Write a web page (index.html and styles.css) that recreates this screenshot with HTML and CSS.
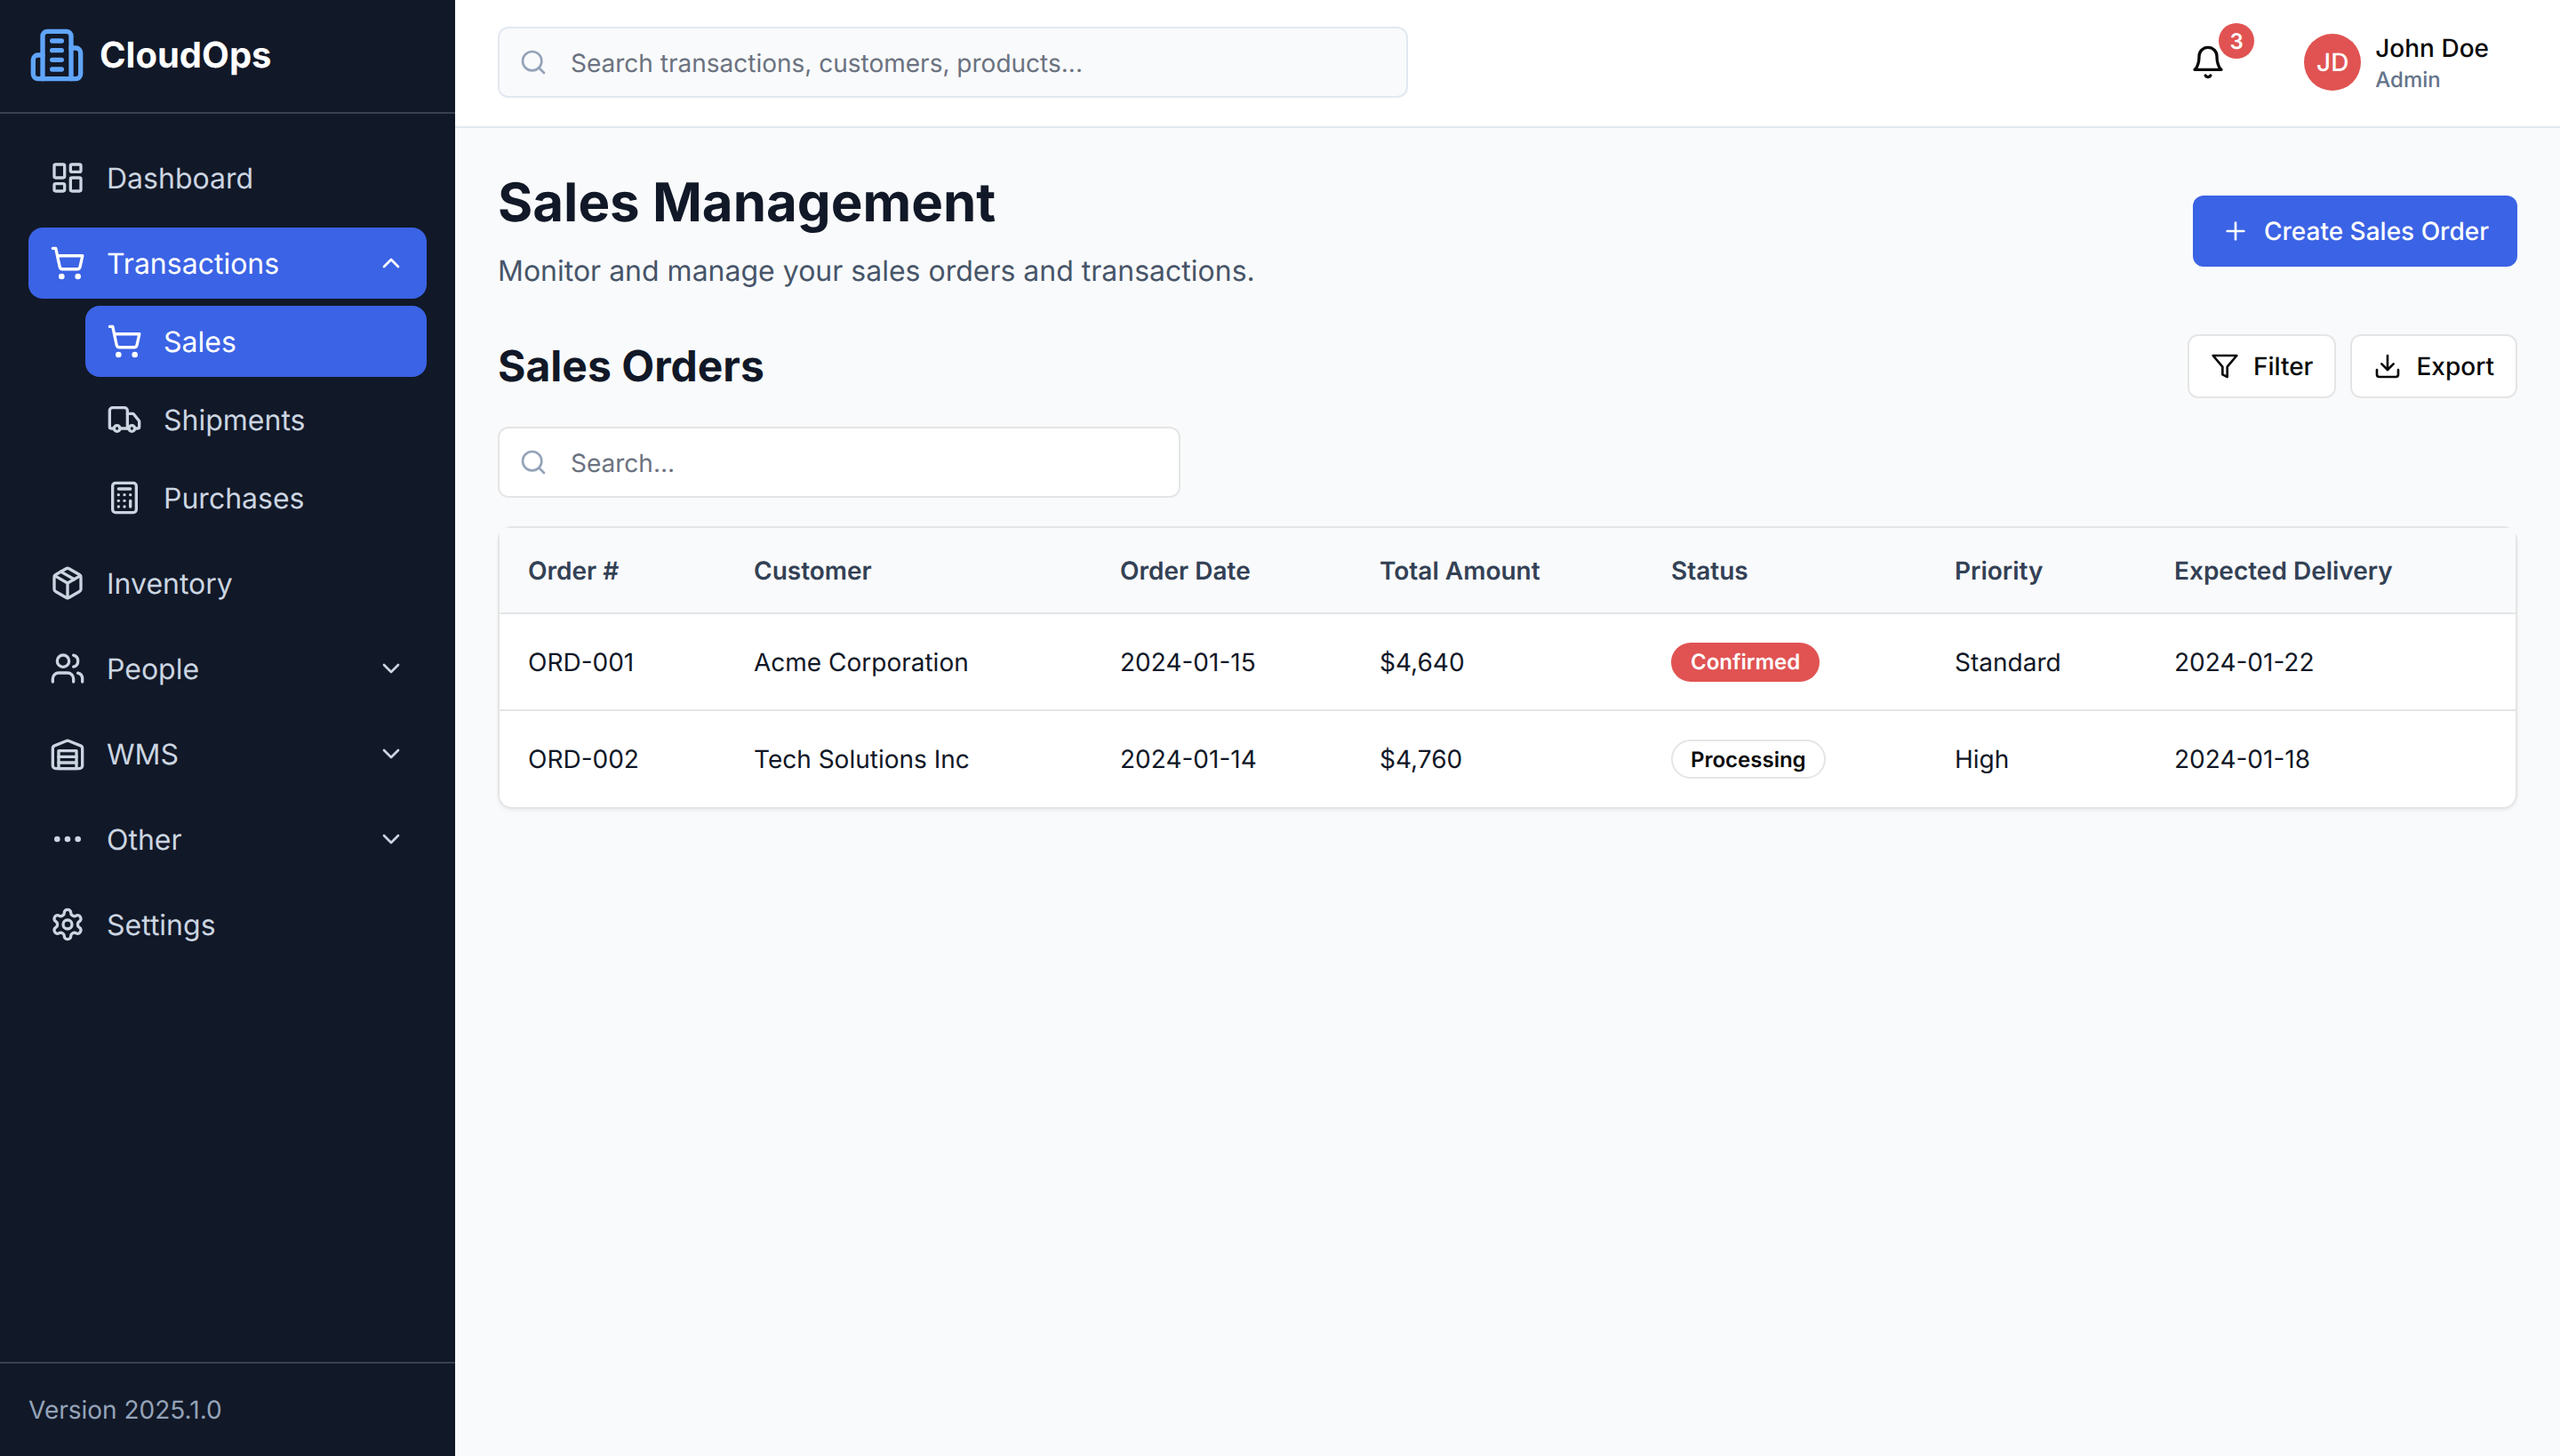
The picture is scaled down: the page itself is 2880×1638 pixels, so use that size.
FILE: index.html
```html
<!DOCTYPE html>
<html lang="en">
<head>
<meta charset="utf-8">
<title>CloudOps - Sales Management</title>
<link rel="stylesheet" href="styles.css">
</head>
<body>
<svg class="sprite" xmlns="http://www.w3.org/2000/svg">
  <symbol id="i-building" viewBox="0 0 24 24"><path d="M6 22V4a2 2 0 0 1 2-2h8a2 2 0 0 1 2 2v18Z"/><path d="M6 12H4a2 2 0 0 0-2 2v6a2 2 0 0 0 2 2h2"/><path d="M18 9h2a2 2 0 0 1 2 2v9a2 2 0 0 1-2 2h-2"/><path d="M10 6h4"/><path d="M10 10h4"/><path d="M10 14h4"/><path d="M10 18h4"/></symbol>
  <symbol id="i-dashboard" viewBox="0 0 24 24"><rect x="3" y="3" width="7" height="9" rx="1"/><rect x="14" y="3" width="7" height="5" rx="1"/><rect x="14" y="12" width="7" height="9" rx="1"/><rect x="3" y="16" width="7" height="5" rx="1"/></symbol>
  <symbol id="i-cart" viewBox="0 0 24 24"><circle cx="8" cy="21" r="1"/><circle cx="19" cy="21" r="1"/><path d="M2.05 2.05h2l2.66 12.42a2 2 0 0 0 2 1.58h9.78a2 2 0 0 0 1.95-1.57l1.65-7.43H5.12"/></symbol>
  <symbol id="i-truck" viewBox="0 0 24 24"><path d="M14 18V6a2 2 0 0 0-2-2H4a2 2 0 0 0-2 2v11a1 1 0 0 0 1 1h2"/><path d="M15 18H9"/><path d="M19 18h2a1 1 0 0 0 1-1v-3.65a1 1 0 0 0-.22-.624l-3.48-4.35A1 1 0 0 0 17.52 8H14"/><circle cx="17" cy="18" r="2"/><circle cx="7" cy="18" r="2"/></symbol>
  <symbol id="i-calculator" viewBox="0 0 24 24"><rect x="4" y="2" width="16" height="20" rx="2"/><path d="M8 6h8"/><path d="M16 14v4"/><path d="M16 10h.01"/><path d="M12 10h.01"/><path d="M8 10h.01"/><path d="M12 14h.01"/><path d="M8 14h.01"/><path d="M12 18h.01"/><path d="M8 18h.01"/></symbol>
  <symbol id="i-package" viewBox="0 0 24 24"><path d="m7.5 4.27 9 5.15"/><path d="M21 8a2 2 0 0 0-1-1.73l-7-4a2 2 0 0 0-2 0l-7 4A2 2 0 0 0 3 8v8a2 2 0 0 0 1 1.73l7 4a2 2 0 0 0 2 0l7-4A2 2 0 0 0 21 16Z"/><path d="m3.3 7 8.7 5 8.7-5"/><path d="M12 22V12"/></symbol>
  <symbol id="i-users" viewBox="0 0 24 24"><path d="M16 21v-2a4 4 0 0 0-4-4H6a4 4 0 0 0-4 4v2"/><circle cx="9" cy="7" r="4"/><path d="M22 21v-2a4 4 0 0 0-3-3.87"/><path d="M16 3.13a4 4 0 0 1 0 7.75"/></symbol>
  <symbol id="i-warehouse" viewBox="0 0 24 24"><path d="M22 8.35V20a2 2 0 0 1-2 2H4a2 2 0 0 1-2-2V8.35A2 2 0 0 1 3.26 6.5l8-3.2a2 2 0 0 1 1.48 0l8 3.2A2 2 0 0 1 22 8.35Z"/><path d="M6 18h12"/><path d="M6 14h12"/><rect x="6" y="10" width="12" height="12"/></symbol>
  <symbol id="i-more" viewBox="0 0 24 24"><circle cx="12" cy="12" r="1"/><circle cx="19" cy="12" r="1"/><circle cx="5" cy="12" r="1"/></symbol>
  <symbol id="i-settings" viewBox="0 0 24 24"><path d="M12.22 2h-.44a2 2 0 0 0-2 2v.18a2 2 0 0 1-1 1.73l-.43.25a2 2 0 0 1-2 0l-.15-.08a2 2 0 0 0-2.73.73l-.22.38a2 2 0 0 0 .73 2.73l.15.1a2 2 0 0 1 1 1.72v.51a2 2 0 0 1-1 1.74l-.15.09a2 2 0 0 0-.73 2.73l.22.38a2 2 0 0 0 2.73.73l.15-.08a2 2 0 0 1 2 0l.43.25a2 2 0 0 1 1 1.73V20a2 2 0 0 0 2 2h.44a2 2 0 0 0 2-2v-.18a2 2 0 0 1 1-1.73l.43-.25a2 2 0 0 1 2 0l.15.08a2 2 0 0 0 2.73-.73l.22-.39a2 2 0 0 0-.73-2.73l-.15-.08a2 2 0 0 1-1-1.74v-.5a2 2 0 0 1 1-1.74l.15-.09a2 2 0 0 0 .73-2.73l-.22-.38a2 2 0 0 0-2.73-.73l-.15.08a2 2 0 0 1-2 0l-.43-.25a2 2 0 0 1-1-1.73V4a2 2 0 0 0-2-2z"/><circle cx="12" cy="12" r="3"/></symbol>
  <symbol id="i-down" viewBox="0 0 24 24"><path d="m6 9 6 6 6-6"/></symbol>
  <symbol id="i-up" viewBox="0 0 24 24"><path d="m18 15-6-6-6 6"/></symbol>
  <symbol id="i-bell" viewBox="0 0 24 24"><path d="M6 8a6 6 0 0 1 12 0c0 7 3 9 3 9H3s3-2 3-9"/><path d="M10.3 21a1.94 1.94 0 0 0 3.4 0"/></symbol>
  <symbol id="i-search" viewBox="0 0 24 24"><circle cx="11" cy="11" r="8"/><path d="m21 21-4.3-4.3"/></symbol>
  <symbol id="i-plus" viewBox="0 0 24 24"><path d="M5 12h14"/><path d="M12 5v14"/></symbol>
  <symbol id="i-filter" viewBox="0 0 24 24"><polygon points="22 3 2 3 10 12.46 10 19 14 21 14 12.46 22 3"/></symbol>
  <symbol id="i-download" viewBox="0 0 24 24"><path d="M21 15v4a2 2 0 0 1-2 2H5a2 2 0 0 1-2-2v-4"/><polyline points="7 10 12 15 17 10"/><line x1="12" y1="15" x2="12" y2="3"/></symbol>
</svg>

<div class="app">
  <aside class="sidebar">
    <div class="brand">
      <svg class="ic ic-logo"><use href="#i-building"/></svg>
      <span class="brand-name">CloudOps</span>
    </div>
    <nav class="nav">
      <a class="item"><svg class="ic"><use href="#i-dashboard"/></svg><span>Dashboard</span></a>
      <div class="group">
        <a class="item active"><svg class="ic"><use href="#i-cart"/></svg><span>Transactions</span><svg class="ic chev"><use href="#i-up"/></svg></a>
        <a class="item sub active"><svg class="ic"><use href="#i-cart"/></svg><span>Sales</span></a>
        <a class="item sub"><svg class="ic"><use href="#i-truck"/></svg><span>Shipments</span></a>
        <a class="item sub"><svg class="ic"><use href="#i-calculator"/></svg><span>Purchases</span></a>
      </div>
      <a class="item"><svg class="ic"><use href="#i-package"/></svg><span>Inventory</span></a>
      <a class="item"><svg class="ic"><use href="#i-users"/></svg><span>People</span><svg class="ic chev"><use href="#i-down"/></svg></a>
      <a class="item"><svg class="ic"><use href="#i-warehouse"/></svg><span>WMS</span><svg class="ic chev"><use href="#i-down"/></svg></a>
      <a class="item"><svg class="ic"><use href="#i-more"/></svg><span>Other</span><svg class="ic chev"><use href="#i-down"/></svg></a>
      <a class="item"><svg class="ic"><use href="#i-settings"/></svg><span>Settings</span></a>
    </nav>
    <div class="version">Version 2025.1.0</div>
  </aside>

  <div class="main">
    <header class="topbar">
      <label class="search search-top">
        <svg class="ic ic-sm"><use href="#i-search"/></svg>
        <input class="search-input" type="text" placeholder="Search transactions, customers, products...">
      </label>
      <div class="topbar-right">
        <div class="bell">
          <svg class="ic"><use href="#i-bell"/></svg>
          <span class="bell-count">3</span>
        </div>
        <div class="user">
          <span class="avatar">JD</span>
          <div class="user-text">
            <span class="user-name">John Doe</span>
            <span class="user-role">Admin</span>
          </div>
        </div>
      </div>
    </header>

    <main class="content">
      <div class="page-head">
        <div>
          <h1 class="page-title">Sales Management</h1>
          <p class="page-sub">Monitor and manage your sales orders and transactions.</p>
        </div>
        <button class="btn btn-primary"><svg class="ic ic-sm"><use href="#i-plus"/></svg><span>Create Sales Order</span></button>
      </div>

      <div class="section-head">
        <h2 class="section-title">Sales Orders</h2>
        <div class="actions">
          <button class="btn btn-outline"><svg class="ic ic-sm"><use href="#i-filter"/></svg><span>Filter</span></button>
          <button class="btn btn-outline"><svg class="ic ic-sm"><use href="#i-download"/></svg><span>Export</span></button>
        </div>
      </div>

      <label class="search search-table">
        <svg class="ic ic-sm"><use href="#i-search"/></svg>
        <input class="search-input" type="text" placeholder="Search...">
      </label>

      <div class="card">
        <table class="table">
          <colgroup>
            <col class="c1"><col class="c2"><col class="c3"><col class="c4"><col class="c5"><col class="c6"><col class="c7">
          </colgroup>
          <thead>
            <tr><th>Order #</th><th>Customer</th><th>Order Date</th><th>Total Amount</th><th>Status</th><th>Priority</th><th>Expected Delivery</th></tr>
          </thead>
          <tbody>
            <tr><td>ORD-001</td><td>Acme Corporation</td><td>2024-01-15</td><td>$4,640</td><td><span class="badge badge-red">Confirmed</span></td><td>Standard</td><td>2024-01-22</td></tr>
            <tr><td>ORD-002</td><td>Tech Solutions Inc</td><td>2024-01-14</td><td>$4,760</td><td><span class="badge badge-outline">Processing</span></td><td>High</td><td>2024-01-18</td></tr>
          </tbody>
        </table>
      </div>
    </main>
  </div>
</div>
</body>
</html>
```
FILE: styles.css
```css
* { box-sizing: border-box; }
html, body { margin: 0; height: 100%; }
body {
  font-family: Inter, "Liberation Sans", sans-serif;
  color: #0a0a0a;
  background: #f9fafb;
  overflow: hidden;
  text-rendering: geometricPrecision;
}
.sprite { display: none; }

.ic {
  width: 40px; height: 40px; flex: none;
  fill: none; stroke: currentColor; stroke-width: 2;
  stroke-linecap: round; stroke-linejoin: round;
}
.ic-sm { width: 32px; height: 32px; }
.ic-logo { width: 64px; height: 64px; color: #60a5fa; }

.app { display: flex; height: 100vh; }

/* Sidebar */
.sidebar {
  width: 512px; flex: none;
  display: flex; flex-direction: column;
  background: #111827; color: #cbd5e1;
}
.brand {
  height: 128px; flex: none;
  display: flex; align-items: center; gap: 16px;
  padding: 0 32px 2px;
  border-bottom: 2px solid #374151;
}
.brand-name { font-size: 40px; font-weight: 700; color: #fff; line-height: 56px; }
.nav { flex: 1; display: flex; flex-direction: column; gap: 16px; padding: 32px; }
.group { display: flex; flex-direction: column; gap: 8px; }
.item {
  height: 80px;
  display: flex; align-items: center; gap: 24px;
  padding: 0 24px;
  border-radius: 16px;
  font-size: 32px; line-height: 48px;
}
.item > span { flex: 1; padding-top: 2px; }
.item.sub { margin-left: 64px; }
.item.active { background: #3b63e5; color: #fff; }
.chev { width: 32px; height: 32px; }
.version {
  flex: none;
  padding: 32px;
  border-top: 2px solid #374151;
  font-size: 28px; line-height: 40px;
  color: #94a3b8;
}

/* Main */
.main { flex: 1; min-width: 0; display: flex; flex-direction: column; }
.topbar {
  height: 144px; flex: none;
  display: flex; align-items: center; justify-content: space-between;
  padding: 0 48px 2px;
  background: #fff;
  border-bottom: 2px solid #e2e8f0;
}
.search {
  height: 80px;
  display: flex; align-items: center; gap: 26px;
  padding: 0 22px;
  border: 2px solid #e5e5e5;
  border-radius: 12px;
  color: #94a3b8;
}
.search-top { width: 1024px; background: #f9fafb; border-color: #e2e8f0; }
.search-table { width: 768px; background: #fff; margin-bottom: 32px; }
.search-input {
  flex: 1; min-width: 0;
  border: 0; outline: 0; padding: 2px 0 0;
  background: transparent;
  font: 400 28px/40px Inter, "Liberation Sans", sans-serif;
  text-rendering: geometricPrecision;
  color: #0a0a0a;
}
.search-input::placeholder { color: #6b7280; opacity: 1; }

.topbar-right { display: flex; align-items: center; gap: 88px; }
.bell { position: relative; width: 40px; height: 40px; color: #0a0a0a; }
.bell-count {
  position: absolute; top: -24px; left: 32px;
  width: 40px; height: 40px; border-radius: 50%;
  display: flex; align-items: center; justify-content: center;
  background: #e05352; color: #fff;
  font-size: 24px; font-weight: 600;
}
.user { display: flex; align-items: center; gap: 16px; padding-right: 32px; }
.avatar {
  width: 64px; height: 64px; border-radius: 50%;
  display: flex; align-items: center; justify-content: center;
  background: #e05352; color: #fff;
  font-size: 28px; font-weight: 500;
}
.user-text { display: flex; flex-direction: column; }
.user-name { font-size: 28px; line-height: 40px; font-weight: 500; }
.user-role { font-size: 24px; line-height: 32px; font-weight: 500; color: #64748b; }

/* Content */
.content { flex: 1; padding: 48px; }
.page-head { display: flex; justify-content: space-between; align-items: flex-start; margin-bottom: 48px; }
.page-title { margin: 0; font-size: 60px; line-height: 72px; font-weight: 700; color: #111827; }
.page-sub { margin: 16px 0 0; padding-top: 1px; font-size: 32px; line-height: 47px; color: #475569; }
.btn {
  display: inline-flex; align-items: center; justify-content: center;
  font: 500 28px/40px Inter, "Liberation Sans", sans-serif;
  text-rendering: geometricPrecision;
  border-radius: 12px;
  cursor: pointer;
}
.btn-primary {
  height: 80px; margin-top: 28px; padding: 0 32px; gap: 16px;
  background: #3b63e5; color: #fff; border: 0;
}
.btn-outline {
  height: 72px; padding: 0 24px; gap: 16px;
  background: #fff; color: #0a0a0a; border: 2px solid #e5e5e5;
}
.section-head { display: flex; justify-content: space-between; align-items: center; margin-bottom: 32px; }
.section-title { margin: 0; font-size: 48px; line-height: 64px; font-weight: 700; color: #111827; }
.actions { display: flex; gap: 16px; }

/* Table */
.card {
  background: #fff;
  border: 2px solid #e5e5e5;
  border-radius: 16px;
  box-shadow: 0 2px 4px rgba(0, 0, 0, .06);
}
.table { width: 100%; border-collapse: separate; border-spacing: 0; table-layout: fixed; }
.c1 { width: 254px; } .c2 { width: 412px; } .c3 { width: 292px; } .c4 { width: 328px; }
.c5 { width: 319px; } .c6 { width: 247px; } .c7 { width: 416px; }
th, td { padding: 0 32px; text-align: left; }
th {
  height: 97px;
  padding-top: 1px;
  background: #f9fafb;
  font-size: 28px; font-weight: 600; color: #334155;
  border-bottom: 2px solid #e5e5e5;
}
td { height: 108px; font-size: 28px; color: #111827; }
tbody tr:first-child td { height: 109px; border-bottom: 2px solid #e5e5e5; }
.badge {
  display: inline-flex; align-items: center;
  height: 44px; padding: 0 22px;
  border-radius: 22px;
  font-size: 24px; font-weight: 600;
}
.badge-red { background: #e05352; color: #fff; }
.badge-outline { padding: 0 20px; border: 2px solid #e5e5e5; color: #0a0a0a; background: #fff; }
```
